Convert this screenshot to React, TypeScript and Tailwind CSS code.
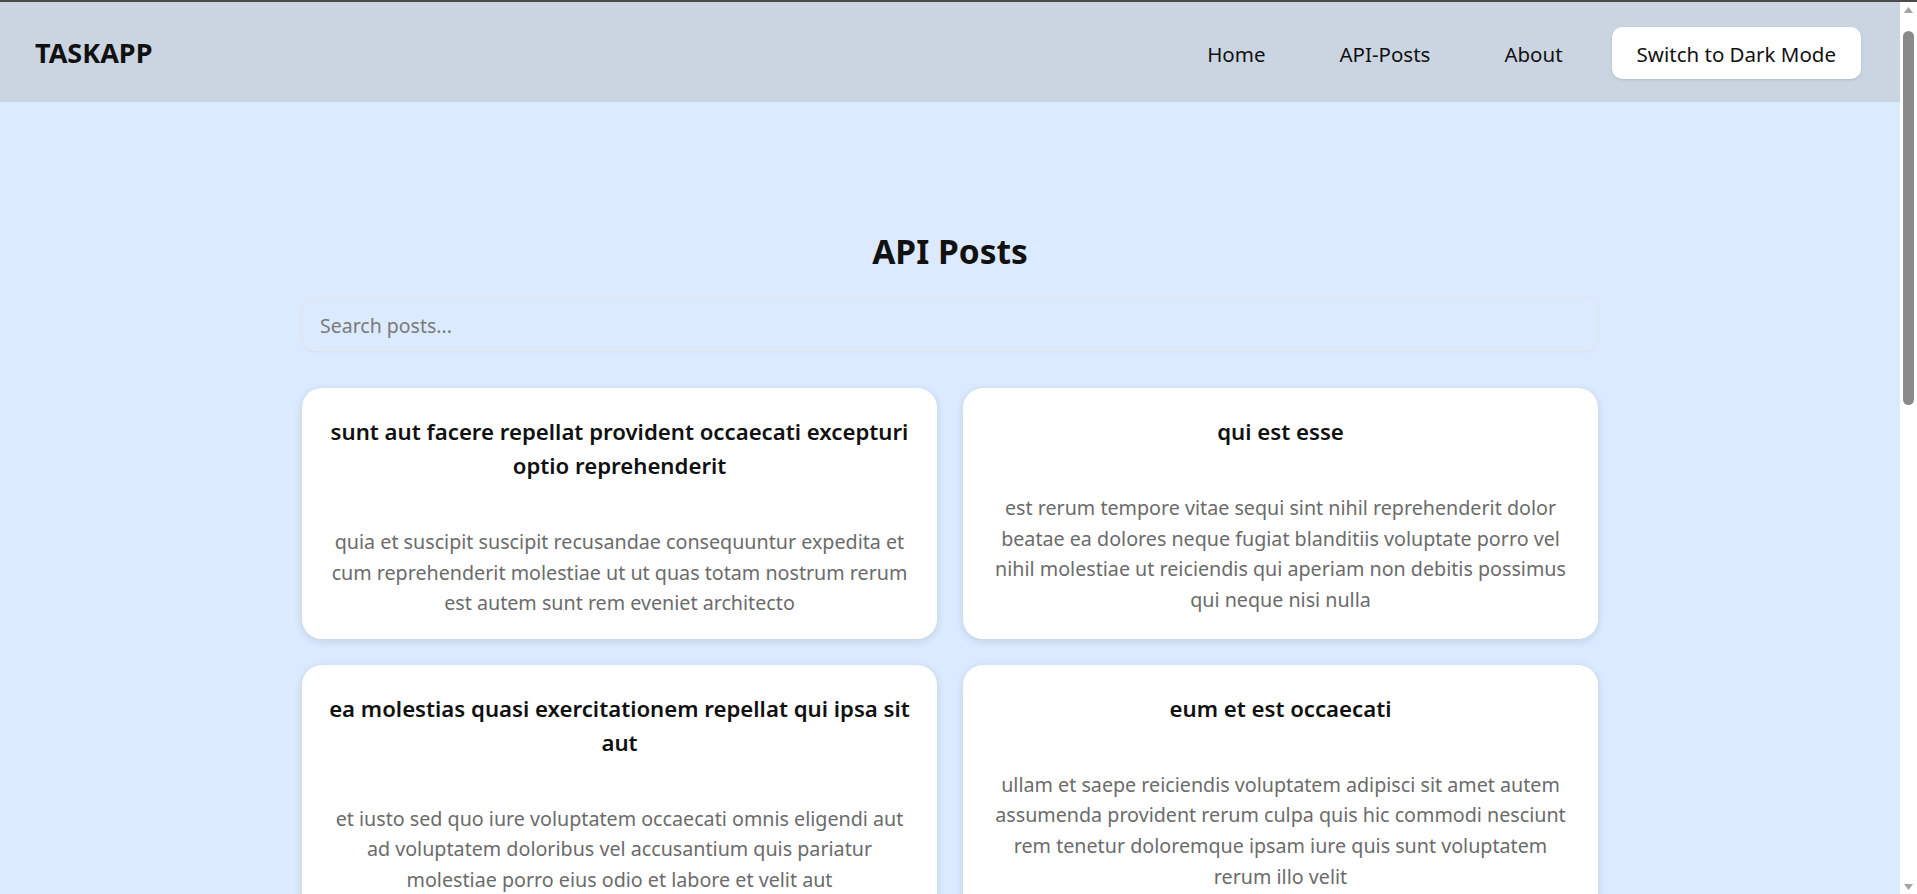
import React, { useState } from "react";

const posts = [
  {
    id: 1,
    title: "sunt aut facere repellat provident occaecati excepturi optio reprehenderit",
    body: "quia et suscipit suscipit recusandae consequuntur expedita et cum reprehenderit molestiae ut ut quas totam nostrum rerum est autem sunt rem eveniet architecto",
  },
  {
    id: 2,
    title: "qui est esse",
    body: "est rerum tempore vitae sequi sint nihil reprehenderit dolor beatae ea dolores neque fugiat blanditiis voluptate porro vel nihil molestiae ut reiciendis qui aperiam non debitis possimus qui neque nisi nulla",
  },
  {
    id: 3,
    title: "ea molestias quasi exercitationem repellat qui ipsa sit aut",
    body: "et iusto sed quo iure voluptatem occaecati omnis eligendi aut ad voluptatem doloribus vel accusantium quis pariatur molestiae porro eius odio et labore et velit aut",
  },
  {
    id: 4,
    title: "eum et est occaecati",
    body: "ullam et saepe reiciendis voluptatem adipisci sit amet autem assumenda provident rerum culpa quis hic commodi nesciunt rem tenetur doloremque ipsam iure quis sunt voluptatem rerum illo velit",
  },
  {
    id: 5,
    title: "nesciunt quas odio",
    body: "repudiandae veniam quaerat sunt sed alias aut fugiat sit autem sed est voluptatem omnis possimus esse voluptatibus quis est aut tenetur dolor neque",
  },
  {
    id: 6,
    title: "dolorem eum magni eos aperiam quia",
    body: "ut aspernatur corporis harum nihil quis provident sequi mollitia nobis aliquid molestiae perspiciatis et ea nemo ab reprehenderit accusantium quas voluptate dolores velit et doloremque molestiae",
  },
];

const links = ["Home", "API-Posts", "About"];

function Scrollbar() {
  return (
    <div className="w-[17px] shrink-0 bg-white flex flex-col items-center pt-[5px] pb-[4px]">
      <svg width="9" height="6" viewBox="0 0 9 6" className="shrink-0">
        <path d="M4.5 0 L9 6 L0 6 Z" fill="#a3a3a3" />
      </svg>
      <div className="w-[11px] h-[374px] mt-[18px] rounded-full bg-[#8a8a8a]" />
      <div className="flex-1" />
      <svg width="9" height="6" viewBox="0 0 9 6" className="shrink-0">
        <path d="M0 0 L9 0 L4.5 6 Z" fill="#a3a3a3" />
      </svg>
    </div>
  );
}

export default function App() {
  const [query, setQuery] = useState("");
  const filtered = posts.filter((p) => p.title.toLowerCase().includes(query.toLowerCase()));

  return (
    <div className="h-screen overflow-hidden flex flex-col bg-[#dbeafe] font-['Noto_Sans',sans-serif] text-[#111]">
      {/* window frame line */}
      <div className="h-[2px] shrink-0 bg-[#4b4b4b]" />

      <div className="flex-1 flex min-h-0">
        <div className="flex-1 overflow-hidden">
          <nav className="h-[100px] bg-[#cbd5e1] flex items-center justify-between pl-[35px] pr-[39px]">
            <span className="text-[27px] font-bold pt-[3px]">TASKAPP</span>
            <div className="flex items-center gap-6">
              {links.map((l) => (
                <a key={l} href="#" className="px-[25px] text-[20.5px] leading-[52px] pt-[4px]">
                  {l}
                </a>
              ))}
              <button className="h-[52px] mt-[2px] px-[25px] pt-[3px] rounded-[10px] bg-white text-[20.5px] shadow-sm">
                Switch to Dark Mode
              </button>
            </div>
          </nav>

          <main className="w-[1296px] mx-auto pt-[128px] pb-16">
            <h1 className="text-center text-[33.5px] leading-[42px] font-bold mb-[25px]">API Posts</h1>

            <input
              value={query}
              onChange={(e) => setQuery(e.target.value)}
              placeholder="Search posts..."
              className="w-full h-[54px] px-[17px] pt-[3px] rounded-[12px] border border-[#e3e6ea] bg-transparent text-[19.5px] placeholder:text-[#7a7a7a] outline-none shadow-[0_1px_3px_rgba(0,0,0,0.04)]"
            />

            <div className="grid grid-cols-2 gap-[26px] mt-[37px]">
              {filtered.map((p) => (
                <div
                  key={p.id}
                  className="bg-white rounded-[20px] px-[25px] pt-[27px] pb-[20px] text-center shadow-[0_2px_8px_rgba(0,0,0,0.12)]"
                >
                  <h3 className="text-[22.2px] leading-[34px] font-semibold mb-[44px]">{p.title}</h3>
                  <p className="text-[19.7px] leading-[30.6px] text-[#6b6b6b]">{p.body}</p>
                </div>
              ))}
            </div>
          </main>
        </div>

        <Scrollbar />
      </div>
    </div>
  );
}
